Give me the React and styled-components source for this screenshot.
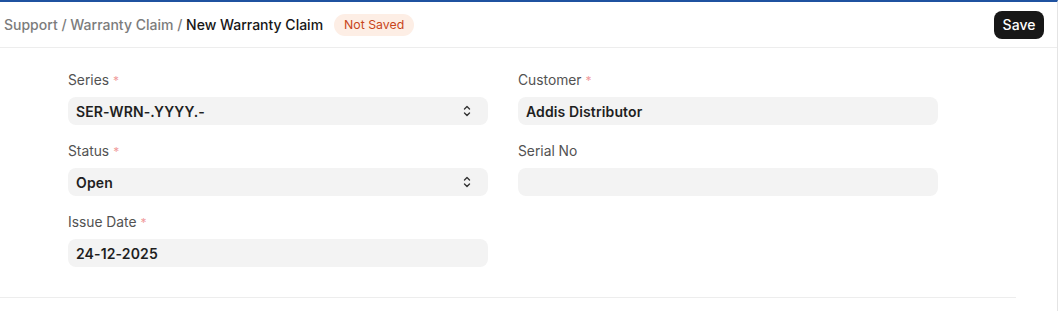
import React from 'react';
import styled, { createGlobalStyle } from 'styled-components';

const Global = createGlobalStyle`
  body {
    margin: 0;
    background: #ffffff;
    font-family: Inter, "Noto Sans", sans-serif;
    -webkit-font-smoothing: antialiased;
  }
`;

const Page = styled.div`
  width: 1058px;
  min-height: 311px;
  border-top: 2px solid #1f52a0;
  border-right: 1px solid #e4e4e4;
  box-sizing: border-box;
`;

const Header = styled.div`
  height: 45px;
  display: flex;
  align-items: center;
  justify-content: space-between;
  padding: 0 13px 0 4px;
  border-bottom: 1px solid #ededed;
`;

const Crumbs = styled.div`
  display: flex;
  align-items: center;
  font-size: 14px;
  font-weight: 500;
  color: #7c7c7c;
  white-space: pre;
`;

const Current = styled.span`
  color: #171717;
`;

const Badge = styled.span`
  margin-left: 11px;
  padding: 0 10px;
  height: 22px;
  line-height: 22px;
  border-radius: 11px;
  background: #fdeee5;
  color: #c8451b;
  font-size: 12.3px;
  font-weight: 400;
`;

const SaveButton = styled.button`
  width: 50px;
  height: 28px;
  padding: 0;
  border: none;
  border-radius: 8px;
  background: #171717;
  color: #ffffff;
  font-family: inherit;
  font-size: 14px;
  font-weight: 500;
`;

const Section = styled.div`
  width: 1016px;
  box-sizing: border-box;
  padding: 23px 78px 30px 68px;
  border-bottom: 1px solid #ededed;
  display: grid;
  grid-template-columns: 420px 420px;
  column-gap: 30px;
`;

const Column = styled.div`
  display: flex;
  flex-direction: column;
  gap: 17px;
`;

const Field = styled.div`
  display: flex;
  flex-direction: column;
  gap: 8px;
`;

const Label = styled.div`
  height: 18px;
  font-size: 13.8px;
  line-height: 18px;
  color: #525252;
`;

const Req = styled.span`
  color: #f09c9c;
  font-size: 12px;
  line-height: 0;
  margin-left: 4px;
`;

const Control = styled.div`
  height: 28px;
  border-radius: 8px;
  background: #f3f3f3;
  display: flex;
  align-items: center;
  justify-content: space-between;
  padding: 0 17px 0 8px;
  font-size: 14px;
  font-weight: 600;
  letter-spacing: 0.12px;
  color: #1f1f1f;
`;

const Chevrons = () => (
  <svg width="8" height="12" viewBox="0 0 8 12" fill="none">
    <path d="M1.5 4L4 1.5L6.5 4" stroke="#333" strokeWidth="1.4" strokeLinecap="round" strokeLinejoin="round" />
    <path d="M1.5 8L4 10.5L6.5 8" stroke="#333" strokeWidth="1.4" strokeLinecap="round" strokeLinejoin="round" />
  </svg>
);

const FormField = ({ label, required, value, select }) => (
  <Field>
    <Label>
      {label}
      {required && <Req>*</Req>}
    </Label>
    <Control>
      <span>{value}</span>
      {select && <Chevrons />}
    </Control>
  </Field>
);

export default function App() {
  return (
    <Page>
      <Global />
      <Header>
        <Crumbs>
          <span>Support / Warranty Claim / </span>
          <Current>New Warranty Claim</Current>
          <Badge>Not Saved</Badge>
        </Crumbs>
        <SaveButton>Save</SaveButton>
      </Header>
      <Section>
        <Column>
          <FormField label="Series" required value="SER-WRN-.YYYY.-" select />
          <FormField label="Status" required value="Open" select />
          <FormField label="Issue Date" required value="24-12-2025" />
        </Column>
        <Column>
          <FormField label="Customer" required value="Addis Distributor" />
          <FormField label="Serial No" value="" />
        </Column>
      </Section>
    </Page>
  );
}
